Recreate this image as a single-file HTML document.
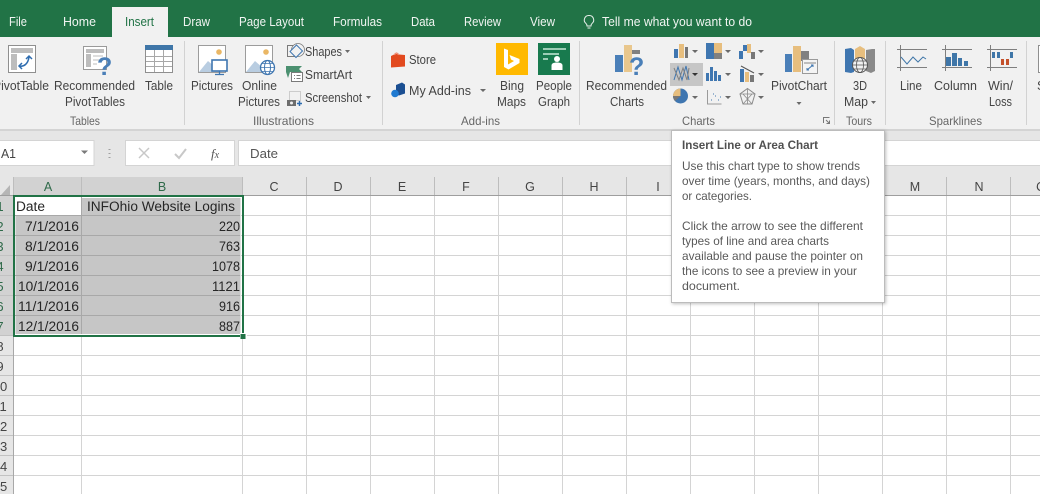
<!DOCTYPE html>
<html><head><meta charset="utf-8"><style>
html,body{margin:0;padding:0;background:#fff;overflow:hidden;width:1040px;height:494px}
svg{display:block}
text{font-family:"Liberation Sans",sans-serif}
.tab{font-size:13px;fill:#f1f5f2}
.r{font-size:12.5px;fill:#444}
.g{font-size:12px;fill:#666}
.c{font-size:13.5px;fill:#262626}
.tip{font-size:12px;fill:#595959}
</style></head><body>
<svg width="1040" height="494" viewBox="0 0 1040 494" xmlns="http://www.w3.org/2000/svg">
<defs><filter id="s" x="-5%" y="-5%" width="110%" height="110%"><feDropShadow dx="1" dy="1" stdDeviation="1.500" flood-color="#000" flood-opacity=".25"/></filter></defs>
<rect width="1040" height="494" fill="#fff"/>
<!-- title/tab strip -->
<rect width="1040" height="37" fill="#217346"/>
<rect y="37" width="1040" height="92" fill="#f1f1f1"/>
<rect x="112" y="7" width="56" height="31" fill="#f1f1f1"/>
<rect y="129" width="1040" height="2" fill="#d4d4d4"/>
<rect y="131" width="1040" height="46" fill="#e6e6e6"/>
<text class="tab" x="9" y="26" textLength="18" lengthAdjust="spacingAndGlyphs">File</text>
<text class="tab" x="63" y="26" textLength="33" lengthAdjust="spacingAndGlyphs">Home</text>
<text class="tab" x="125" y="26" textLength="29" lengthAdjust="spacingAndGlyphs" style="fill:#217346">Insert</text>
<text class="tab" x="183" y="26" textLength="27" lengthAdjust="spacingAndGlyphs">Draw</text>
<text class="tab" x="239" y="26" textLength="65" lengthAdjust="spacingAndGlyphs">Page Layout</text>
<text class="tab" x="333" y="26" textLength="49" lengthAdjust="spacingAndGlyphs">Formulas</text>
<text class="tab" x="411" y="26" textLength="24" lengthAdjust="spacingAndGlyphs">Data</text>
<text class="tab" x="464" y="26" textLength="37" lengthAdjust="spacingAndGlyphs">Review</text>
<text class="tab" x="530" y="26" textLength="25" lengthAdjust="spacingAndGlyphs">View</text>
<path d="M589 15.500a4.500 4.500 0 0 1 3 8c-.8.700-1 1.500-1 2.500h-4c0-1-.2-1.800-1-2.500a4.500 4.500 0 0 1 3-8zM587.500 28h3" fill="none" stroke="#e8f0eb" stroke-width="1"/>
<text class="tab" x="602" y="26" textLength="150" lengthAdjust="spacingAndGlyphs">Tell me what you want to do</text>
<!-- separators -->
<g stroke="#d2d2d2"><path d="M184.500 41V125M382.500 41V125M579.500 41V125M834.500 41V125M885.500 41V125M1026.500 41V125"/></g>
<!-- ribbon labels -->
<text class="r" x="-7" y="90" textLength="56" lengthAdjust="spacingAndGlyphs">PivotTable</text>
<text class="r" x="54" y="90" textLength="81" lengthAdjust="spacingAndGlyphs">Recommended</text>
<text class="r" x="65" y="106" textLength="60" lengthAdjust="spacingAndGlyphs">PivotTables</text>
<text class="r" x="145" y="90" textLength="28" lengthAdjust="spacingAndGlyphs">Table</text>
<text class="g" x="70" y="125" textLength="30" lengthAdjust="spacingAndGlyphs">Tables</text>
<text class="r" x="191" y="90" textLength="42" lengthAdjust="spacingAndGlyphs">Pictures</text>
<text class="r" x="242" y="90" textLength="35" lengthAdjust="spacingAndGlyphs">Online</text>
<text class="r" x="238" y="106" textLength="42" lengthAdjust="spacingAndGlyphs">Pictures</text>
<text class="r" x="305" y="56" textLength="37" lengthAdjust="spacingAndGlyphs">Shapes</text>
<text class="r" x="305" y="79" textLength="47" lengthAdjust="spacingAndGlyphs">SmartArt</text>
<text class="r" x="305" y="102" textLength="57" lengthAdjust="spacingAndGlyphs">Screenshot</text>
<text class="g" x="253" y="125" textLength="61" lengthAdjust="spacingAndGlyphs">Illustrations</text>
<text class="r" x="409" y="64" textLength="27" lengthAdjust="spacingAndGlyphs">Store</text>
<text class="r" x="409" y="95" textLength="62" lengthAdjust="spacingAndGlyphs">My Add-ins</text>
<text class="r" x="500" y="90" textLength="24" lengthAdjust="spacingAndGlyphs">Bing</text>
<text class="r" x="497" y="106" textLength="29" lengthAdjust="spacingAndGlyphs">Maps</text>
<text class="r" x="536" y="90" textLength="36" lengthAdjust="spacingAndGlyphs">People</text>
<text class="r" x="538" y="106" textLength="32" lengthAdjust="spacingAndGlyphs">Graph</text>
<text class="g" x="461" y="125" textLength="39" lengthAdjust="spacingAndGlyphs">Add-ins</text>
<text class="r" x="586" y="90" textLength="81" lengthAdjust="spacingAndGlyphs">Recommended</text>
<text class="r" x="610" y="106" textLength="34" lengthAdjust="spacingAndGlyphs">Charts</text>
<text class="g" x="682" y="125" textLength="33" lengthAdjust="spacingAndGlyphs">Charts</text>
<text class="r" x="771" y="90" textLength="56" lengthAdjust="spacingAndGlyphs">PivotChart</text>
<text class="r" x="853" y="90" textLength="14" lengthAdjust="spacingAndGlyphs">3D</text>
<text class="r" x="844" y="106" textLength="24" lengthAdjust="spacingAndGlyphs">Map</text>
<text class="g" x="846" y="125" textLength="26" lengthAdjust="spacingAndGlyphs">Tours</text>
<text class="r" x="900" y="90" textLength="22" lengthAdjust="spacingAndGlyphs">Line</text>
<text class="r" x="934" y="90" textLength="43" lengthAdjust="spacingAndGlyphs">Column</text>
<text class="r" x="988" y="90" textLength="25" lengthAdjust="spacingAndGlyphs">Win/</text>
<text class="r" x="989" y="106" textLength="23" lengthAdjust="spacingAndGlyphs">Loss</text>
<text class="g" x="929" y="125" textLength="53" lengthAdjust="spacingAndGlyphs">Sparklines</text>
<!-- small dropdown arrows -->
<g fill="#6a6a6a">
<path d="M345 50h5l-2.500 3zM366 96h5l-2.500 3zM480 89h6l-3 3zM796.500 102h5l-2.500 3zM871 101h5l-2.500 3zM692 50h6l-3 3zM725 50h6l-3 3zM758 50h6l-3 3zM725 73h6l-3 3zM758 73h6l-3 3zM692 96h6l-3 3zM725 96h6l-3 3zM758 96h6l-3 3z"/>
</g>
<!-- PivotTable icon -->
<rect x="8.500" y="45.500" width="27" height="27" fill="#fff" stroke="#8f8f8f"/>
<rect x="11" y="48" width="22" height="5" fill="#bdbdbd"/><rect x="11" y="54" width="6" height="16" fill="#bdbdbd"/>
<path d="M19 66c5 1 9-2 10-9M26 59l3-3 3 3M22 63l-3 3 3 3" fill="none" stroke="#2f6db0" stroke-width="1.500"/>
<!-- Recommended PivotTables -->
<rect x="83.500" y="46.500" width="23" height="23" fill="#fff" stroke="#9a9a9a"/>
<rect x="86" y="49" width="18" height="4" fill="#bdbdbd"/><rect x="86" y="54" width="5" height="13" fill="#bdbdbd"/><path d="M93 56h10M93 60h6M93 64h4" stroke="#bdbdbd"/>
<text x="97" y="75" style="font-size:25px;font-weight:bold;fill:#4a7fb8">?</text>
<!-- Table -->
<rect x="145.500" y="45.500" width="27" height="27" fill="#fff" stroke="#8f8f8f"/>
<rect x="145" y="45" width="28" height="5" fill="#3f76a8"/>
<path d="M146 56.500h26M146 61.500h26M146 66.500h26M154.500 50v22M163.500 50v22" stroke="#a8a8a8"/>
<!-- Pictures -->
<rect x="198.500" y="45.500" width="27" height="27" fill="#fff" stroke="#9c9c9c"/>
<circle cx="219" cy="52" r="2.800" fill="#eab765"/>
<path d="M199 72l9-11 8 7 3 4z" fill="#b9cde1"/>
<rect x="212" y="60" width="15" height="11" fill="#fff" stroke="#3f76b0" stroke-width="1.600"/>
<path d="M219.500 71v3M215 74.500h9" stroke="#3f76b0" stroke-width="1.300"/>
<!-- Online Pictures -->
<rect x="245.500" y="45.500" width="27" height="27" fill="#fff" stroke="#9c9c9c"/>
<circle cx="266" cy="52" r="2.800" fill="#eab765"/>
<path d="M246 72l9-11 8 7 3 4z" fill="#b9cde1"/>
<circle cx="267.500" cy="67.500" r="7" fill="#fff" stroke="#3f76b0" stroke-width="1.300"/>
<ellipse cx="267.500" cy="67.500" rx="3" ry="7" fill="none" stroke="#3f76b0"/>
<path d="M260.500 67.500h14M262 63.500h11M262 71.500h11" stroke="#3f76b0" stroke-width=".8"/>
<!-- Shapes -->
<path d="M287.500 45.500h7v11h-7z" fill="none" stroke="#7a7a7a"/>
<circle cx="298" cy="50" r="6.500" fill="#f1f1f1" stroke="#7a7a7a" stroke-width=".8"/>
<path d="M296.500 45l6 6-6.500 6.500-6-6z" fill="#f1f1f1" stroke="#3f76b0"/>
<!-- SmartArt -->
<path d="M286 66h16l-3 3 3 3h-12l-2 6-2-6z" fill="#4b9070"/>
<rect x="291.500" y="72.500" width="11" height="9" fill="#fff" stroke="#7a7a7a"/>
<path d="M294 75.500h1M294 78.500h1M296.500 75.500h4M296.500 78.500h4" stroke="#7a7a7a"/>
<!-- Screenshot -->
<rect x="289.500" y="91.500" width="11" height="9" fill="none" stroke="#a8a8a8" stroke-dasharray="1 1"/>
<rect x="287" y="100" width="9" height="6" fill="#6d6d6d"/><circle cx="291.500" cy="103" r="1.500" fill="#f1f1f1"/>
<path d="M297 103.500h5M299.500 101v5" stroke="#2f6db0" stroke-width="1.500"/>
<!-- Store -->
<path d="M391 56l3-1.500c1-2.500 4-2.500 5 0l6 .5v11.500l-14 1z" fill="#e24a1f"/>
<path d="M394.500 55c.5-2 3.500-2 4 0" stroke="#f4a08a" fill="none"/>
<!-- My add-ins -->
<path d="M396 85l6-2.500 3 2v9l-6 2-3-1z" fill="#1b4f92"/>
<circle cx="395" cy="93.500" r="3.800" fill="#1f7ad1"/>
<!-- Bing -->
<rect x="496" y="43" width="32" height="32" fill="#ffb900"/>
<path d="M504 48.500l4 1.500v14.500l6-3.500-3-1.500-1.500-4.500 10 4v4l-11 6.500-4.500-2.500z" fill="#fff"/>
<!-- People Graph -->
<rect x="538" y="43" width="32" height="32" fill="#187a4e"/>
<path d="M543 49h23M543 54h16M543 59h5" stroke="#9ccdb5" stroke-width="2"/>
<circle cx="557" cy="59" r="3" fill="#fff"/><path d="M551.500 70v-4.500c0-2 2-3 5.500-3s5.500 1 5.500 3v4.500z" fill="#fff"/>
<!-- Recommended Charts -->
<rect x="615" y="55" width="8" height="17" fill="#4a7fb8"/>
<rect x="624" y="45" width="8" height="27" fill="#e9c78d"/>
<rect x="632" y="50" width="8" height="4" fill="#808080"/>
<text x="629" y="75" style="font-size:25px;font-weight:bold;fill:#4a7fb8">?</text>
<!-- highlighted line chart -->
<rect x="670" y="63" width="33" height="23" fill="#c6c6c6"/>
<path d="M692 73h6l-3 3z" fill="#333"/>
<path d="M674 80l4-13 4 13 4-14 3 14" fill="none" stroke="#3f76b0"/>
<path d="M674 68l5 12 4-12 4 12 2-12" fill="none" stroke="#808080"/>
<!-- Charts: row 1 -->
<rect x="674" y="49" width="4" height="9" fill="#3f76b0"/><rect x="679" y="44" width="5" height="14" fill="#e7be7e"/><rect x="685" y="47" width="3" height="11" fill="#777"/>
<rect x="706" y="43" width="8" height="16" fill="#3f76b0"/><rect x="714" y="43" width="8" height="10" fill="#e7be7e"/><rect x="714" y="53" width="8" height="6" fill="#808080"/>
<rect x="739" y="51" width="4" height="8" fill="#3f76b0"/><rect x="743" y="45" width="4" height="6" fill="#3f76b0"/><rect x="747" y="44" width="4" height="9" fill="#e7be7e"/><rect x="751" y="52" width="4" height="7" fill="#777"/>
<!-- row 2 -->
<path d="M706 81v-8h3v8zM710 81v-14h3v14zM714 81v-10h3v10zM718 81v-6h3v6z" fill="#3f76b0"/>
<rect x="740" y="69" width="4" height="13" fill="#3f76b0"/><rect x="745" y="72" width="4" height="10" fill="#e7be7e"/><rect x="750" y="75" width="4" height="7" fill="#777"/>
<path d="M741 66l13 7" stroke="#555"/>
<!-- row 3 -->
<circle cx="680.500" cy="96" r="7.500" fill="#3f76b0"/><path d="M680.500 96v-7.500a7.500 7.500 0 0 0-7.500 7.500z" fill="#e7be7e"/><path d="M680.500 96l-7.500 0a7.500 7.500 0 0 0 2 5z" fill="#777"/>
<path d="M707.500 90v14h14" fill="none" stroke="#9a9a9a"/>
<path d="M711 100h1M715 96h1M718 100h1M713 94h1M720 97h1" stroke="#3f76b0"/>
<path d="M747.500 88.500l7.500 5.500-3 10h-9l-3-10z" fill="none" stroke="#8a8a8a"/>
<path d="M747.500 88.500v15M740 94h15M743 104l9-10M752 104l-9-10" stroke="#8a8a8a" stroke-width=".8"/>
<!-- PivotChart -->
<rect x="785" y="54" width="7" height="18" fill="#4a7fb8"/><rect x="793" y="46" width="8" height="26" fill="#e7be7e"/><rect x="801" y="51" width="8" height="10" fill="#808080"/>
<rect x="802.500" y="59.500" width="15" height="14" fill="#f4f4f4" stroke="#9a9a9a"/>
<path d="M804 63h12" stroke="#bdbdbd" stroke-width="2"/>
<path d="M807 70l6-5M811 65h2v2M807 68v2h2" fill="none" stroke="#3f76b0"/>
<!-- 3D Map -->
<path d="M845 49l6-1 3 2v22l-3 1-6-1z" fill="#3f76b0"/>
<path d="M855 49l5-3 5 3v14h-10z" fill="#e7be7e"/>
<path d="M866 50l6-1 3 0v22l-4 2-5-2z" fill="#8a8a8a"/>
<circle cx="860" cy="65" r="7.500" fill="#f1f1f1" stroke="#555"/>
<ellipse cx="860" cy="65" rx="3.500" ry="7.500" fill="none" stroke="#555" stroke-width=".8"/>
<path d="M852.500 65h15M854 61h12M854 69h12" stroke="#555" stroke-width=".8"/>
<!-- Sparklines -->
<g stroke="#7f7f7f" fill="none">
<path d="M897 49.500h30M897 67.500h30M900.500 45v26"/>
<path d="M942 49.500h30M942 67.500h30M945.500 45v26"/>
<path d="M987 49.500h30M987 67.500h30M990.500 45v26"/>
</g>
<path d="M901 57l6 7 6-7 5 5 5-5 3 2" fill="none" stroke="#3f76a8"/>
<g fill="#3f76a8"><rect x="946" y="57" width="5" height="9"/><rect x="952" y="53" width="5" height="13"/><rect x="958" y="58" width="4" height="8"/><rect x="964" y="61" width="4" height="5"/></g>
<g fill="#3f76a8"><rect x="992" y="52" width="3" height="6"/><rect x="997" y="52" width="3" height="6"/><rect x="1010" y="52" width="3" height="6"/></g>
<g fill="#c4512b"><rect x="1001" y="59" width="3" height="6"/><rect x="1006" y="59" width="3" height="6"/></g>
<!-- next group sliver -->
<rect x="1038.500" y="45.500" width="4" height="27" fill="#fff" stroke="#8f8f8f"/>
<text class="r" x="1037" y="90">S</text>
<!-- dialog launcher -->
<path d="M823.500 123v-5.500h6M826 120l3 3M829.500 120.500v3h-3" fill="none" stroke="#777"/>
<!-- formula bar -->
<rect x="-1" y="140.500" width="95" height="25" fill="#fff" stroke="#d4d4d4"/>
<text x="1" y="158" textLength="15" lengthAdjust="spacingAndGlyphs" style="font-size:13px;fill:#444">A1</text>
<path d="M81 150.500h7l-3.500 3.500z" fill="#7a7a7a"/>
<path d="M109.500 149v1M109.500 153v1M109.500 157v1" stroke="#a0a0a0" stroke-width="2"/>
<rect x="125.500" y="140.500" width="109" height="25" fill="#fff" stroke="#d4d4d4"/>
<rect x="238.500" y="140.500" width="802" height="25" fill="#fff" stroke="#d4d4d4"/>
<path d="M139 148l10 10M149 148l-10 10" stroke="#c8c8c8" stroke-width="1.500"/>
<path d="M175 154l4 4 7-9" fill="none" stroke="#c8c8c8" stroke-width="2"/>
<text x="211" y="158" style="font-family:'Liberation Serif',serif;font-style:italic;font-size:13px;fill:#555">f<tspan font-size="10">x</tspan></text>
<text x="250" y="158" textLength="28" lengthAdjust="spacingAndGlyphs" style="font-size:13px;fill:#555">Date</text>
<!-- column headers -->
<rect x="0" y="177" width="1040" height="18" fill="#e6e6e6"/>
<rect x="14" y="177" width="229" height="18" fill="#d2d2d2"/>
<rect x="0" y="195" width="1040" height="1" fill="#9e9e9e"/>
<path d="M1 195L10 185V195z" fill="#b5b5b5"/>
<g stroke="#bdbdbd"><path d="M13.500 177V195M81.500 177V195M242.500 177V195M306.500 177V195M370.500 177V195M434.500 177V195M498.500 177V195M562.500 177V195M626.500 177V195M690.500 177V195M754.500 177V195M818.500 177V195M882.500 177V195M946.500 177V195M1010.500 177V195"/></g>
<g text-anchor="middle" font-size="12.500" fill="#444">
<text x="48" y="191" fill="#2f6a4a">A</text><text x="162" y="191" fill="#2f6a4a">B</text><text x="274" y="191">C</text><text x="338" y="191">D</text><text x="402" y="191">E</text><text x="466" y="191">F</text><text x="530" y="191">G</text><text x="594" y="191">H</text><text x="658" y="191">I</text><text x="915" y="191">M</text><text x="979" y="191">N</text><text x="1041" y="191">O</text>
</g>
<!-- row header -->
<rect x="0" y="196" width="13" height="298" fill="#e6e6e6"/>
<rect x="0" y="196" width="13" height="140" fill="#d2d2d2"/>
<path d="M0 215.500h13M0 235.500h13M0 255.500h13M0 275.500h13M0 295.500h13M0 315.500h13M0 335.500h13M0 355.500h13M0 375.500h13M0 395.500h13M0 415.500h13M0 435.500h13M0 455.500h13M0 475.500h13" stroke="#c2c2c2"/>
<path d="M13.500 196V494" stroke="#a8a8a8"/>
<g text-anchor="middle" font-size="13" fill="#444">
<text x="0" y="211" fill="#2f6a4a">1</text><text x="0" y="231" fill="#2f6a4a">2</text><text x="0" y="251" fill="#2f6a4a">3</text><text x="0" y="271" fill="#2f6a4a">4</text><text x="0" y="291" fill="#2f6a4a">5</text><text x="0" y="311" fill="#2f6a4a">6</text><text x="0" y="331" fill="#2f6a4a">7</text><text x="0" y="351">8</text><text x="0" y="371">9</text><text x="0" y="391">10</text><text x="0" y="411">11</text><text x="0" y="431">12</text><text x="0" y="451">13</text><text x="0" y="471">14</text><text x="0" y="491">15</text>
</g>
<!-- gridlines -->
<g stroke="#d4d4d4">
<path d="M14 215.500H1040M14 235.500H1040M14 255.500H1040M14 275.500H1040M14 295.500H1040M14 315.500H1040M14 335.500H1040M14 355.500H1040M14 375.500H1040M14 395.500H1040M14 415.500H1040M14 435.500H1040M14 455.500H1040M14 475.500H1040"/>
<path d="M81.500 196V494M242.500 196V494M306.500 196V494M370.500 196V494M434.500 196V494M498.500 196V494M562.500 196V494M626.500 196V494M690.500 196V494M754.500 196V494M818.500 196V494M882.500 196V494M946.500 196V494M1010.500 196V494"/>
</g>
<!-- selection fill -->
<rect x="15" y="197" width="226" height="138" fill="#fff"/>
<rect x="15.500" y="198" width="225" height="136" fill="#c6c6c6"/>
<rect x="15" y="197" width="66" height="18" fill="#fff"/>
<path d="M15 215.500H240M15 235.500H240M15 255.500H240M15 275.500H240M15 295.500H240M15 315.500H240M81.500 197V334" stroke="#a8a8a8"/>
<!-- cell text -->
<text class="c" x="16" y="211" textLength="29" lengthAdjust="spacingAndGlyphs">Date</text>
<text class="c" x="87" y="211" textLength="148" lengthAdjust="spacingAndGlyphs">INFOhio Website Logins</text>
<text class="c" x="25" y="231" textLength="54" lengthAdjust="spacingAndGlyphs">7/1/2016</text>
<text class="c" x="25" y="251" textLength="54" lengthAdjust="spacingAndGlyphs">8/1/2016</text>
<text class="c" x="25" y="271" textLength="54" lengthAdjust="spacingAndGlyphs">9/1/2016</text>
<text class="c" x="18" y="291" textLength="61" lengthAdjust="spacingAndGlyphs">10/1/2016</text>
<text class="c" x="18" y="311" textLength="61" lengthAdjust="spacingAndGlyphs">11/1/2016</text>
<text class="c" x="18" y="331" textLength="61" lengthAdjust="spacingAndGlyphs">12/1/2016</text>
<text class="c" x="219" y="231" textLength="21" lengthAdjust="spacingAndGlyphs">220</text>
<text class="c" x="219" y="251" textLength="21" lengthAdjust="spacingAndGlyphs">763</text>
<text class="c" x="212" y="271" textLength="28" lengthAdjust="spacingAndGlyphs">1078</text>
<text class="c" x="212" y="291" textLength="28" lengthAdjust="spacingAndGlyphs">1121</text>
<text class="c" x="219" y="311" textLength="21" lengthAdjust="spacingAndGlyphs">916</text>
<text class="c" x="219" y="331" textLength="21" lengthAdjust="spacingAndGlyphs">887</text>
<!-- selection border -->
<rect x="14" y="196" width="229" height="140" fill="none" stroke="#217346" stroke-width="2"/>
<rect x="240" y="333" width="7" height="6" fill="#fff"/>
<rect x="240.500" y="334" width="5" height="5" fill="#217346"/>
<!-- tooltip -->
<rect x="671.500" y="130.500" width="213" height="172" fill="#fff" stroke="#bcbcbc" filter="url(#s)"/>
<text class="tip" x="682" y="149" textLength="136" lengthAdjust="spacingAndGlyphs" style="font-weight:bold;fill:#505050">Insert Line or Area Chart</text>
<text class="tip" x="682" y="170" textLength="178" lengthAdjust="spacingAndGlyphs">Use this chart type to show trends</text>
<text class="tip" x="682" y="185" textLength="188" lengthAdjust="spacingAndGlyphs">over time (years, months, and days)</text>
<text class="tip" x="682" y="200" textLength="70" lengthAdjust="spacingAndGlyphs">or categories.</text>
<text class="tip" x="682" y="230" textLength="181" lengthAdjust="spacingAndGlyphs">Click the arrow to see the different</text>
<text class="tip" x="682" y="245" textLength="147" lengthAdjust="spacingAndGlyphs">types of line and area charts</text>
<text class="tip" x="682" y="260" textLength="181" lengthAdjust="spacingAndGlyphs">available and pause the pointer on</text>
<text class="tip" x="682" y="275" textLength="175" lengthAdjust="spacingAndGlyphs">the icons to see a preview in your</text>
<text class="tip" x="682" y="290" textLength="58" lengthAdjust="spacingAndGlyphs">document.</text>
</svg>
</body></html>
